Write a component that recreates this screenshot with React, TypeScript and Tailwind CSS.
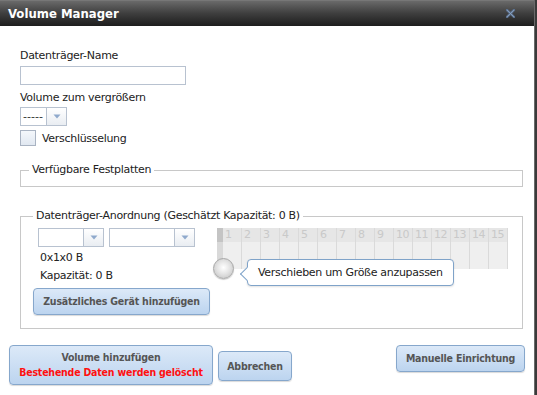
import React from "react";

function Caret() {
  return (
    <svg width="8" height="5" viewBox="0 0 8 5">
      <path d="M0.5 0.5 L7.5 0.5 L4 4.5 Z" fill="#8fa9cc" />
    </svg>
  );
}

function Combo({ text, left, width }: { text?: string; left: number; width: number }) {
  return (
    <div className="flex h-[19px]" style={{ width }}>
      <div
        className="flex-1 border border-[#b8c2d0] bg-white text-[11px] leading-[17px] pl-[2px] text-[#333]"
        style={{ minWidth: left }}
      >
        {text}
      </div>
      <div className="w-[20px] border border-l-0 border-[#b8c2d0] bg-gradient-to-b from-white to-[#e9edf2] flex items-center justify-center">
        <Caret />
      </div>
    </div>
  );
}

function Btn({ children, className = "" }: { children: React.ReactNode; className?: string }) {
  return (
    <div
      className={
        "border border-[#86a7cc] rounded-[4px] bg-gradient-to-b from-[#dce9f8] to-[#bcd4ef] text-[#555] font-bold text-[10.5px] font-['DejaVu_Sans_Condensed',sans-serif] whitespace-nowrap flex flex-col items-center justify-center shadow-[0_1px_1px_rgba(0,0,0,0.15)] " +
        className
      }
    >
      {children}
    </div>
  );
}

export default function App() {
  const cols = Array.from({ length: 15 }, (_, i) => i + 1);
  return (
    <div className="w-screen h-screen flex bg-white text-[#222] font-['DejaVu_Sans',sans-serif] overflow-hidden">
      <div className="flex-1 flex flex-col">
        <div className="h-[26px] border-t border-[#777] bg-gradient-to-b from-[#6a6a6a] via-[#3e3e3e] to-[#1e1e1e] flex items-center justify-between pl-[8px] pr-[19px]">
          <span className="text-white font-bold text-[13px] font-['DejaVu_Sans_Condensed',sans-serif]">Volume Manager</span>
          <svg width="9" height="9" viewBox="0 0 9 9">
            <path d="M1 1 L8 8 M8 1 L1 8" stroke="#5d7391" strokeWidth="2.4" strokeLinecap="square" />
            <path d="M1 1 L8 8 M8 1 L1 8" stroke="#8ea4bf" strokeWidth="0.8" />
          </svg>
        </div>

        <div className="flex-1 flex flex-col pl-[20px] pr-[8px] pt-[23px] text-[11px] leading-[13px]">
          <div className="tracking-[-0.3px]">Datenträger-Name</div>
          <div className="mt-[4px] w-[166px] h-[19px] border border-[#b8c2d0]" />
          <div className="mt-[6px] tracking-[-0.3px]">Volume zum vergrößern</div>
          <div className="mt-[3px]">
            <Combo text="-----" left={26} width={47} />
          </div>
          <div className="mt-[4px] flex items-center gap-[6px]">
            <div className="w-[16px] h-[16px] border border-[#a9b3c2] bg-gradient-to-b from-[#f4f7fb] to-[#e1e8f1]" />
            <span className="tracking-[-0.3px]">Verschlüsselung</span>
          </div>

          <fieldset className="mt-[18px] mr-[3px] border border-[#c8c8c8] h-[23px] px-[8px]">
            <legend className="px-[3px] tracking-[-0.3px] leading-[12px]">Verfügbare Festplatten</legend>
          </fieldset>

          <fieldset className="mt-[23px] mr-[3px] border border-[#c8c8c8] h-[119px] pl-[12px] pr-[14px] pt-[6px]">
            <legend className="px-[3px] tracking-[-0.3px] leading-[12px]">
              Datenträger-Anordnung (Geschätzt Kapazität: 0 B)
            </legend>
            <div className="flex">
              <div className="flex flex-col w-[180px]">
                <div className="flex gap-[5px] pl-[5px]">
                  <Combo left={46} width={66} />
                  <Combo left={66} width={86} />
                </div>
                <div className="mt-[4px] pl-[7px] leading-[13px] tracking-[-0.3px]">0x1x0 B</div>
                <div className="mt-[5px] pl-[7px] leading-[13px] tracking-[-0.3px]">Kapazität: 0 B</div>
                <Btn className="mt-[6px] w-[177px] h-[27px] tracking-[-0.2px]">Zusätzliches Gerät hinzufügen</Btn>
              </div>
              <div className="relative ml-[4px] flex h-[41px]">
                <div className="w-[6px] flex flex-col">
                  <div className="h-[14px] bg-[#c4c4c4]" />
                  <div className="flex-1 bg-[#d9d9d9]" />
                </div>
                {cols.map((c) => (
                  <div key={c} className="w-[19px] flex flex-col border-r border-[#dadada]">
                    <div className="h-[14px] bg-[#e6e6e6] text-[#c9c9c9] text-[11px] leading-[14px] pl-[2px] tracking-[-0.5px]">
                      {c}
                    </div>
                    <div className="flex-1 bg-[#efefef]" />
                  </div>
                ))}
                <div className="absolute left-[-4px] top-[30px] w-[21px] h-[21px] rounded-full border border-[#a8a8a8] bg-[radial-gradient(circle_at_50%_45%,#ffffff_0%,#e4e4e4_45%,#bdbdbd_100%)] shadow-[0_1px_1px_rgba(0,0,0,0.2)]" />
                <div className="absolute left-[30px] top-[31px] h-[27px] px-[10px] border border-[#7fa3c9] rounded-[4px] bg-white flex items-center whitespace-nowrap tracking-[-0.3px] shadow-[0_1px_2px_rgba(0,0,0,0.12)]">
                  Verschieben um Größe anzupassen
                  <div className="absolute left-[-6px] top-[9px] w-[10px] h-[10px] bg-white border-l border-b border-[#7fa3c9] rotate-45" />
                </div>
              </div>
            </div>
          </fieldset>

          <div className="mt-[16px] -ml-[11px] mr-[1px] flex items-start">
            <Btn className="w-[204px] h-[40px] leading-[15px] tracking-[-0.2px]">
              <span>Volume hinzufügen</span>
              <span className="text-[#ff1010]">Bestehende Daten werden gelöscht</span>
            </Btn>
            <Btn className="ml-[5px] mt-[6px] w-[74px] h-[30px] tracking-[-0.2px]">Abbrechen</Btn>
            <div className="flex-1" />
            <Btn className="w-[129px] h-[27px] tracking-[-0.2px]">Manuelle Einrichtung</Btn>
          </div>
        </div>
      </div>
      <div className="w-[5px] bg-[#3a3a3a] border-l border-[#6a6a6a]" />
    </div>
  );
}
